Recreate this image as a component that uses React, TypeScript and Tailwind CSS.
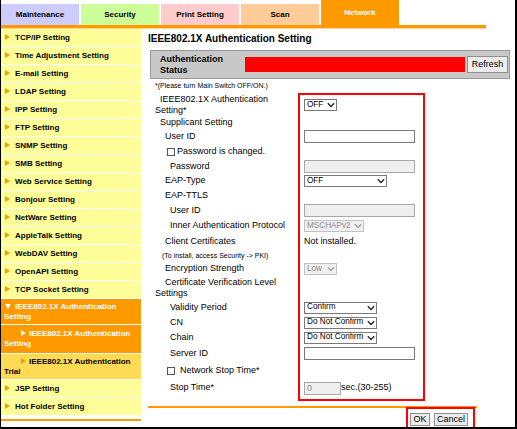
import React from "react";
import clsx from "clsx";

const navItems = [
  "TCP/IP Setting",
  "Time Adjustment Setting",
  "E-mail Setting",
  "LDAP Setting",
  "IPP Setting",
  "FTP Setting",
  "SNMP Setting",
  "SMB Setting",
  "Web Service Setting",
  "Bonjour Setting",
  "NetWare Setting",
  "AppleTalk Setting",
  "WebDAV Setting",
  "OpenAPI Setting",
  "TCP Socket Setting",
];

const tabs = [
  { label: "Maintenance", bg: "bg-[#ccccff]" },
  { label: "Security", bg: "bg-[#ccff99]" },
  { label: "Print Setting", bg: "bg-[#ffcccc]" },
  { label: "Scan", bg: "bg-[#ffcc99]" },
];

const Arrow = ({ color = "#ff9900" }: { color?: string }) => (
  <svg width="5" height="6" viewBox="0 0 5 6" className="inline-block align-[0px]">
    <polygon points="0,0 5,3 0,6" fill={color} />
  </svg>
);

const Chevron = ({ disabled }: { disabled?: boolean }) => (
  <svg width="8" height="6" viewBox="0 0 8 6" className="ml-auto shrink-0">
    <path
      d="M0.8 1.2 L4 4.5 L7.2 1.2"
      fill="none"
      stroke={disabled ? "#a3a3a3" : "#222"}
      strokeWidth="1.3"
    />
  </svg>
);

const Select = ({
  w,
  text,
  disabled,
}: {
  w: string;
  text: string;
  disabled?: boolean;
}) => (
  <div
    className={clsx(
      "flex h-[12px] items-center overflow-hidden whitespace-nowrap border pl-[2px] pr-px text-[8.2px] leading-none",
      w,
      disabled
        ? "border-[#c2c2c2] bg-[#f0f0f0] text-[#8c8c8c]"
        : "border-[#7a7a7a] bg-white text-black"
    )}
  >
    <span className="mr-[2px]">{text}</span>
    <Chevron disabled={disabled} />
  </div>
);

const TextInput = ({ w = "w-[111px]", disabled, value }: { w?: string; disabled?: boolean; value?: string }) => (
  <div
    className={clsx(
      "flex h-[13px] items-center border pl-[2px] text-[9px] leading-none",
      w,
      disabled ? "border-[#a8a8a8] bg-[#efefef] text-[#8c8c8c]" : "border-[#7a7a7a] bg-white"
    )}
  >
    {value}
  </div>
);

const Checkbox = () => (
  <div className="h-[8px] w-[8px] border border-[#555] bg-white" />
);

const Row = ({
  h,
  label,
  children,
}: {
  h: string;
  label: React.ReactNode;
  children?: React.ReactNode;
}) => (
  <div className={clsx("flex items-center", h)}>
    <div className="w-[149px] shrink-0">{label}</div>
    <div className="flex items-center">{children}</div>
  </div>
);

const Button = ({ children, w }: { children: React.ReactNode; w: string }) => (
  <div
    className={clsx(
      "flex items-center justify-center border border-[#8f8f8f] bg-[#ececec] text-[9px] leading-none text-black",
      w
    )}
  >
    {children}
  </div>
);

export default function App() {
  return (
    <div className="relative h-[429px] w-[517px] overflow-hidden border-b-2 border-l border-r-2 border-black bg-white font-['Liberation_Sans',Arial,sans-serif] text-black">
      {/* Tabs */}
      <div className="flex h-[25px] items-end">
        {tabs.map((t) => (
          <div
            key={t.label}
            className={clsx(
              "mr-[2px] flex h-[21px] w-[78px] items-center justify-center text-[8px] font-bold",
              t.bg
            )}
          >
            {t.label}
          </div>
        ))}
        <div className="flex h-[25px] w-[78px] items-center justify-center bg-[#ff9900] text-[8px] font-bold text-white">
          Network
        </div>
      </div>
      <div className="h-[3px] w-[485px] bg-[#ff9900]" />
      <div className="h-px w-[485px] bg-[#ffd699]" />

      <div className="flex">
        {/* Sidebar */}
        <aside className="w-[140px] shrink-0">
          {navItems.map((n) => (
            <div
              key={n}
              className="flex h-[18px] items-center border-b border-white bg-[#ffff99] pl-[4px] text-[8px] font-bold"
            >
              <span className="inline-block w-[10px]">
                <Arrow />
              </span>
              {n}
            </div>
          ))}
          <div className="flex h-[26px] items-center border-b border-white bg-[#ff9900] pl-[3px] text-[8px] font-bold leading-[10px] text-white">
            <div>
              <span className="inline-block w-[11px] pl-[1px]">
                <svg width="6" height="5" viewBox="0 0 6 5" className="inline-block">
                  <polygon points="0,0 6,0 3,5" fill="#fff" />
                </svg>
              </span>
              IEEE802.1X Authentication Setting
            </div>
          </div>
          <div className="flex h-[29px] items-center border-b border-white bg-[#ff9900] pl-[3px] text-[8px] font-bold leading-[10px] text-white">
            <div>
              <span className="inline-block w-[25px] pl-[17px]">
                <Arrow color="#fff" />
              </span>
              IEEE802.1X Authentication Setting
            </div>
          </div>
          <div className="flex h-[26px] items-center border-b border-white bg-[#ffdb55] pl-[3px] text-[8px] font-bold leading-[10px]">
            <div>
              <span className="inline-block w-[25px] pl-[17px]">
                <Arrow />
              </span>
              IEEE802.1X Authentication Trial
            </div>
          </div>
          {["JSP Setting", "Hot Folder Setting"].map((n) => (
            <div
              key={n}
              className="flex h-[18px] items-center border-b border-white bg-[#ffff99] pl-[4px] text-[8px] font-bold"
            >
              <span className="inline-block w-[10px]">
                <Arrow />
              </span>
              {n}
            </div>
          ))}
          <div className="mt-[3px] h-[2px] bg-[#ff9900]" />
        </aside>

        {/* Main */}
        <main className="flex-1 pl-[7px]">
          <div className="flex h-[18px] items-center text-[10px] font-bold">
            IEEE802.1X Authentication Setting
          </div>
          <div className="ml-[2px] mt-[3px] flex h-[29px] w-[360px] items-center border border-[#9a9a9a] bg-[#c8c8c8]">
            <div className="w-[94px] pl-[9px] text-[9px] font-bold leading-[11px]">
              Authentication
              <br />
              Status
            </div>
            <div className="h-[15px] w-[220px] bg-[#ff0000]" />
            <div className="ml-[2px]">
              <Button w="h-[17px] w-[41px]">Refresh</Button>
            </div>
          </div>

          <div className="pl-[7px] text-[9px]">
            <div className="flex h-[14px] items-center text-[7px]">
              *(Please turn Main Switch OFF/ON.)
            </div>
            <div className="flex h-[23px] items-start">
              <div className="w-[149px] shrink-0 pt-[1px]">
                <div className="w-[122px] leading-[11px] indent-[5px]">
                  IEEE802.1X Authentication Setting*
                </div>
              </div>
              <div className="mt-[6px]">
                <Select w="w-[33px]" text="OFF" />
              </div>
            </div>
            <Row h="h-[13px]" label={<span className="pl-[5px]">Supplicant Setting</span>} />
            <Row h="h-[15px]" label={<span className="pl-[10px]">User ID</span>}>
              <TextInput />
            </Row>
            <Row
              h="h-[15px]"
              label={
                <div className="flex items-center pl-[12px]">
                  <Checkbox />
                  <span className="ml-[2px]">Password is changed.</span>
                </div>
              }
            />
            <Row h="h-[15px]" label={<span className="pl-[15px]">Password</span>}>
              <TextInput disabled />
            </Row>
            <Row h="h-[14px]" label={<span className="pl-[10px]">EAP-Type</span>}>
              <Select w="w-[83px]" text="OFF" />
            </Row>
            <Row h="h-[15px]" label={<span className="pl-[10px]">EAP-TTLS</span>} />
            <Row h="h-[15px]" label={<span className="pl-[15px]">User ID</span>}>
              <TextInput disabled />
            </Row>
            <Row
              h="h-[16px]"
              label={<span className="pl-[15px]">Inner Authentication Protocol</span>}
            >
              <Select w="w-[60px]" text="MSCHAPv2" disabled />
            </Row>
            <Row h="h-[16px]" label={<span className="pl-[10px]">Client Certificates</span>}>
              <span>Not installed.</span>
            </Row>
            <div className="flex h-[12px] items-center pl-[7px] text-[7px]">
              (To install, access Security -&gt; PKI)
            </div>
            <Row h="h-[14px]" label={<span className="pl-[10px]">Encryption Strength</span>}>
              <Select w="w-[33px]" text="Low" disabled />
            </Row>
            <Row
              h="h-[24px]"
              label={
                <div className="leading-[11px] indent-[10px]">
                  Certificate Verification Level Settings
                </div>
              }
            />
            <Row h="h-[15px]" label={<span className="pl-[15px]">Validity Period</span>}>
              <Select w="w-[73px]" text="Confirm" />
            </Row>
            <Row h="h-[15px]" label={<span className="pl-[15px]">CN</span>}>
              <Select w="w-[73px]" text="Do Not Confirm" />
            </Row>
            <Row h="h-[15px]" label={<span className="pl-[15px]">Chain</span>}>
              <Select w="w-[73px]" text="Do Not Confirm" />
            </Row>
            <Row h="h-[17px]" label={<span className="pl-[15px]">Server ID</span>}>
              <TextInput />
            </Row>
            <Row
              h="h-[18px]"
              label={
                <div className="flex items-center pl-[12px]">
                  <Checkbox />
                  <span className="ml-[5px]">Network Stop Time*</span>
                </div>
              }
            />
            <Row h="h-[16px]" label={<span className="pl-[15px]">Stop Time*</span>}>
              <TextInput w="w-[37px]" disabled value="0" />
              <span>sec.(30-255)</span>
            </Row>
          </div>

          <div className="mt-[10px] h-[2px] w-[329px] bg-[#ff9900]" />
          <div className="flex w-[329px] justify-end gap-[4px] pr-[9px] pt-[5px]">
            <Button w="h-[13px] w-[20px]">OK</Button>
            <Button w="h-[13px] w-[34px]">Cancel</Button>
          </div>
        </main>
      </div>

      {/* Red annotation boxes */}
      <div className="absolute left-[297px] top-[93px] h-[308px] w-[127px] border-2 border-[#ff0000]" />
      <div className="absolute left-[405px] top-[407px] h-[30px] w-[69px] border-2 border-[#ff0000]" />
    </div>
  );
}
